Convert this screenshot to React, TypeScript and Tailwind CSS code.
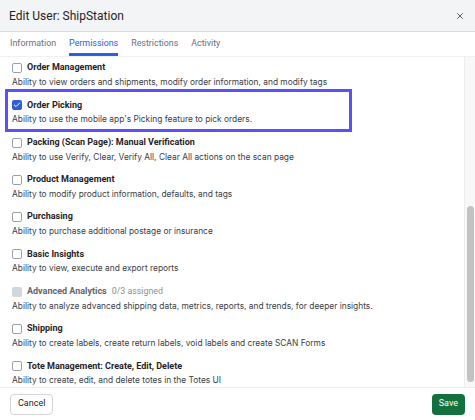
import { X, Check } from 'lucide-react'

type Perm = { label: string; desc: string; checked?: boolean; disabled?: boolean; note?: string; highlight?: boolean }

const perms: Perm[] = [
  { label: 'Order Management', desc: 'Ability to view orders and shipments, modify order information, and modify tags' },
  { label: 'Order Picking', desc: "Ability to use the mobile app's Picking feature to pick orders.", checked: true, highlight: true },
  { label: 'Packing (Scan Page): Manual Verification', desc: 'Ability to use Verify, Clear, Verify All, Clear All actions on the scan page' },
  { label: 'Product Management', desc: 'Ability to modify product information, defaults, and tags' },
  { label: 'Purchasing', desc: 'Ability to purchase additional postage or insurance' },
  { label: 'Basic Insights', desc: 'Ability to view, execute and export reports' },
  { label: 'Advanced Analytics', desc: 'Ability to analyze advanced shipping data, metrics, reports, and trends, for deeper insights.', disabled: true, note: '0/3 assigned' },
  { label: 'Shipping', desc: 'Ability to create labels, create return labels, void labels and create SCAN Forms' },
  { label: 'Tote Management: Create, Edit, Delete', desc: 'Ability to create, edit, and delete totes in the Totes UI' },
]

const tabs = ['Information', 'Permissions', 'Restrictions', 'Activity']

function Box({ checked, disabled }: { checked?: boolean; disabled?: boolean }) {
  if (checked)
    return (
      <span className="w-[10px] h-[10px] rounded-[2px] bg-[#2f5fd3] flex items-center justify-center shrink-0">
        <Check size={8} strokeWidth={3} className="text-white" />
      </span>
    )
  if (disabled) return <span className="w-[10px] h-[10px] rounded-[2px] bg-[#d4d6da] shrink-0" />
  return <span className="w-[10px] h-[10px] rounded-[2px] border border-[#9ca0a8] bg-white shrink-0" />
}

export default function App() {
  return (
    <div className="w-[475px] h-[420px] bg-white flex flex-col overflow-hidden font-['Roboto',sans-serif] text-[#1f2328]">
      {/* header */}
      <header className="h-[32px] shrink-0 bg-[#f3f4f6] border-b border-[#d9dbdf] flex items-center justify-between pl-[9px] pr-[10px]">
        <h1 className="text-[12px] leading-none text-[#1f2328]">Edit User: ShipStation</h1>
        <X size={10} strokeWidth={2} className="text-[#3c4047]" />
      </header>

      {/* tabs */}
      <nav className="h-[25px] shrink-0 flex items-stretch gap-[13px] px-[10px] border-b border-[#f0f1f3]">
        {tabs.map((t) => (
          <div
            key={t}
            className={`flex items-center text-[8.9px] pt-[2px] border-b-[3px] ${
              t === 'Permissions' ? 'text-[#2b62d9] border-[#2b62d9]' : 'text-[#6b7079] border-transparent'
            }`}
          >
            {t}
          </div>
        ))}
      </nav>

      {/* scrolling body */}
      <div className="flex-1 flex min-h-0">
        <div className="flex-1 overflow-hidden pt-[4px] pl-[12px]">
          {perms.map((p) => (
            <div key={p.label} className="relative h-[37.3px]">
              {p.highlight && (
                <span className="absolute left-[-7px] top-[-9px] w-[347px] h-[43px] border-[3px] border-[#5a50fa]" />
              )}
              <div className="flex items-center gap-[5px] h-[14px]">
                <Box checked={p.checked} disabled={p.disabled} />
                <span className={`text-[9px] font-bold ${p.disabled ? 'text-[#62666d]' : 'text-[#1f2328]'}`}>{p.label}</span>
                {p.note && <span className="text-[8.8px] text-[#8b8f96]">{p.note}</span>}
              </div>
              <p className="font-['Inter',sans-serif] text-[8.4px] leading-[15px] text-[#3a3e45] whitespace-nowrap">{p.desc}</p>
            </div>
          ))}
        </div>

        {/* scrollbar */}
        <div className="w-[11px] shrink-0 bg-[#f8f8f8] border-l border-[#ececec] flex flex-col items-center">
          <div className="mt-[149px] w-[7px] h-[176px] rounded-full bg-[#c2c2c2]" />
        </div>
      </div>

      {/* footer */}
      <footer className="h-[33px] shrink-0 border-t border-[#eceef0] flex items-center justify-between px-[10px]">
        <button className="h-[21px] px-[7px] rounded-[4px] border border-[#d3d5d9] bg-white text-[9px] text-[#1f2328]">Cancel</button>
        <button className="h-[21px] px-[7px] rounded-[4px] bg-[#15703f] text-[9px] text-white">Save</button>
      </footer>
    </div>
  )
}
